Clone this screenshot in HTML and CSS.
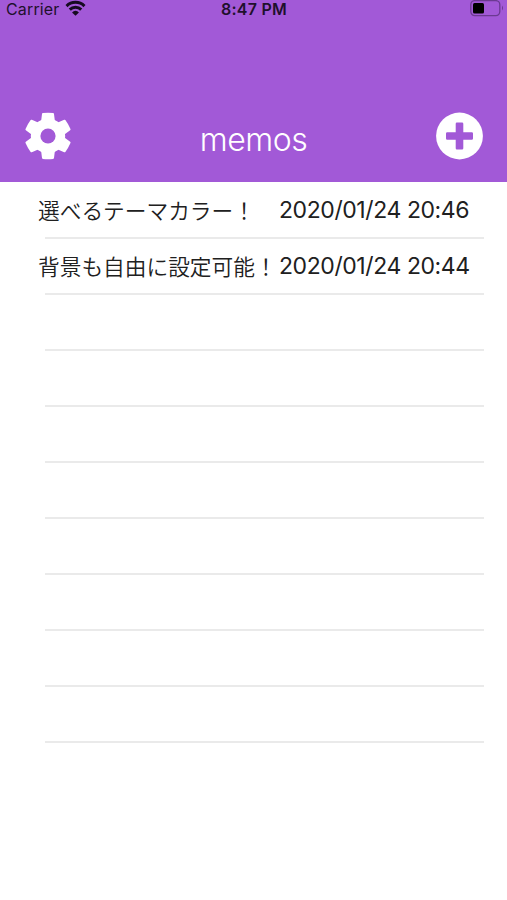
FILE: index.html
```
<!DOCTYPE html>
<html lang="ja">
<head>
<meta charset="utf-8">
<title>memos</title>
<link rel="stylesheet" href="styles.css">
</head>
<body>
<header class="header">
  <div class="status">
    <div class="carrier"><span>Carrier</span>
      <svg class="wifi" width="21" height="16" viewBox="0 0 22 16" fill="none" stroke="#160b20" stroke-width="3.1"><path d="M1.6 6a13.2 13.2 0 0 1 18.8 0M5 9.7a8.4 8.4 0 0 1 12 0"/><path d="M11 16 7.4 12.6a4.8 4.8 0 0 1 7.2 0Z" fill="#160b20" stroke="none"/></svg>
    </div>
    <div class="time">8:47 PM</div>
    <svg class="battery" width="36" height="18" viewBox="0 0 36 18"><rect x=".8" y=".6" width="29" height="15" rx="4" fill="none" stroke="#6b3a91" stroke-width="1.3"/><rect x="3" y="3" width="11" height="10.5" rx="1.5" fill="#000"/><path d="M32 5.5q2 2.5 0 5Z" fill="#6b3a91"/></svg>
  </div>
  <nav class="nav">
    <svg class="icon" width="48" height="48" viewBox="-24 -24 48 48"><g fill="#fff" stroke="#fff" stroke-width="2" stroke-linejoin="round"><circle r="16.2"/><path id="tooth" d="M-6-14-5-22Q0-22.6 5-22L6-14V14L5 22Q0 22.6-5 22L-6 14Z"/><use href="#tooth" transform="rotate(60)"/><use href="#tooth" transform="rotate(120)"/></g><circle r="7.6" fill="#a259d7"/></svg>
    <h1 class="title">memos</h1>
    <svg class="icon" width="48" height="48" viewBox="-24 -24 48 48"><circle cx="-.5" r="23.4" fill="#fff"/><path d="M-3.1-13.5h5.2q1.2 0 1.2 1.2v8.5h8.5q1.2 0 1.2 1.2v5.2q0 1.2-1.2 1.2H3.3v8.5q0 1.2-1.2 1.2h-5.2q-1.2 0-1.2-1.2V3.8h-8.5q-1.2 0-1.2-1.2v-5.2q0-1.2 1.2-1.2h8.5v-8.5q0-1.2 1.2-1.2Z" fill="#a259d7"/></svg>
  </nav>
</header>
<main class="list">
  <div class="row"><span class="name">選べるテーマカラー！</span><time class="date">2020/01/24 20:46</time></div>
  <div class="row"><span class="name">背景も自由に設定可能！</span><time class="date">2020/01/24 20:44</time></div>
  <div class="row"></div>
  <div class="row"></div>
  <div class="row"></div>
  <div class="row"></div>
  <div class="row"></div>
  <div class="row"></div>
  <div class="row"></div>
  <div class="row"></div>
</main>
</body>
</html>
```
FILE: styles.css
```
* { box-sizing: border-box; }
body {
  margin: 0;
  height: 900px;
  overflow: hidden;
  background: #fff;
  color: #202020;
  font-family: Inter, "Noto Sans CJK JP", sans-serif;
}
.header {
  height: 181.5px;
  background: #a259d7;
}
.status {
  display: grid;
  grid-template-columns: 215px 1fr auto;
  height: 18px;
  padding: 0 1px 0 6px;
  color: #1f102c;
  font-size: 16px;
  line-height: 18px;
}
.carrier { display: flex; gap: 5px; letter-spacing: 0.15px; }
.time { font-weight: 600; letter-spacing: 0.25px; }
.nav {
  display: flex;
  align-items: center;
  justify-content: space-between;
  margin-top: 94px;
  height: 48px;
  padding: 0 23px 0 24px;
}
.icon { flex: none; }
.title {
  margin: 7px 0 0 -1px;
  color: #fff;
  font-size: 32px;
  font-weight: 350;
  letter-spacing: -0.5px;
  line-height: 40px;
}
.row {
  display: flex;
  align-items: center;
  height: 56.1px;
  margin: 0 23px 0 45px;
  padding-top: 2px;
  box-shadow: 0 1px #eaeaea;
  border-bottom: 1px solid #eaeaea;
}
.name {
  width: 241px;
  margin-left: -7px;
  flex: none;
  font-family: "Noto Sans CJK JP", sans-serif;
  font-size: 21.7px;
  font-weight: 350;
  line-height: 32px;
  white-space: nowrap;
}
.date {
  font-size: 23px;
  letter-spacing: -0.42px;
  line-height: 32px;
  white-space: nowrap;
}
```
